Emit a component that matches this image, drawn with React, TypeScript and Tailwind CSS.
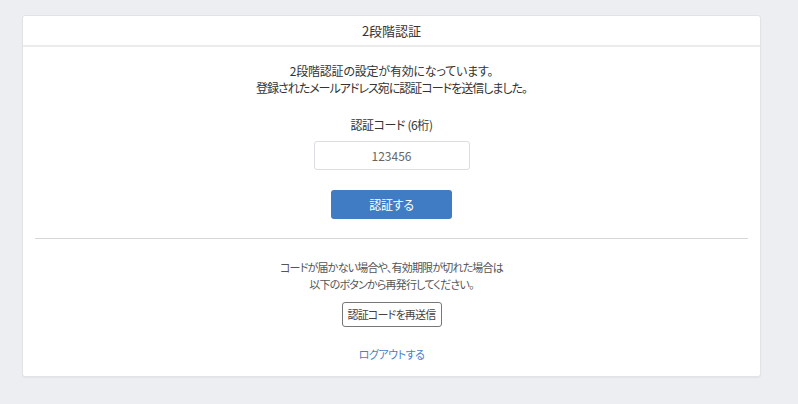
export default function App() {
  return (
    <div
      className="min-h-[404px] w-full bg-[#edeef2] pt-[15px] pb-[27px] [font-feature-settings:'palt']"
      style={{ fontFamily: '"Noto Sans CJK JP", "Noto Sans", sans-serif' }}
    >
      <div className="ml-[22px] w-[739px] rounded-[3px] border border-[#e2e3e7] bg-white shadow-[0_1px_1px_rgba(0,0,0,0.04)]">
        {/* Header */}
        <div className="flex h-[31px] items-center justify-center border-b-2 border-[#ebebeb] text-[13px] text-[#333]">
          2段階認証
        </div>

        {/* Body */}
        <div className="px-[12px] pt-[15px] pb-[12px] text-center">
          <p className="text-[12px] leading-[17px] text-[#333]">
            <span className="tracking-[-0.2px]">2段階認証の設定が有効になっています。</span>
            <br />
            <span className="tracking-[-1px]">登録されたメールアドレス宛に認証コードを送信しました。</span>
          </p>

          <div className="mt-[20px] text-[12px] leading-[18px] tracking-[-0.4px] text-[#333]">
            認証コード (6桁)
          </div>

          <div className="mt-[7px] flex justify-center">
            <input
              type="text"
              placeholder="123456"
              className="h-[29px] w-[156px] rounded-[3px] border border-[#dcdde1] bg-white text-center text-[12px] text-[#333] placeholder:text-[#666] outline-none"
            />
          </div>

          <div className="mt-[20px] flex justify-center">
            <button className="h-[29px] w-[121px] rounded-[3px] bg-[#3f7cc4] text-[12px] tracking-[-0.3px] text-white">
              認証する
            </button>
          </div>

          <div className="mt-[19px] border-t border-[#d6d6d6]" />

          <p className="mt-[20px] text-[11px] leading-[17px] tracking-[-0.8px] text-[#555]">
            コードが届かない場合や、有効期限が切れた場合は
            <br />
            以下のボタンから再発行してください。
          </p>

          <div className="mt-[9px] flex justify-center">
            <button className="h-[25px] w-[100px] whitespace-nowrap rounded-[3px] border border-[#777] bg-white px-0 text-[11px] tracking-[-0.8px] text-[#444]">
              認証コードを再送信
            </button>
          </div>

          <div className="mt-[13px]">
            <a href="#" className="text-[11px] leading-[17px] tracking-[-0.5px] text-[#4a80c8]">
              ログアウトする
            </a>
          </div>
        </div>
      </div>
    </div>
  );
}
